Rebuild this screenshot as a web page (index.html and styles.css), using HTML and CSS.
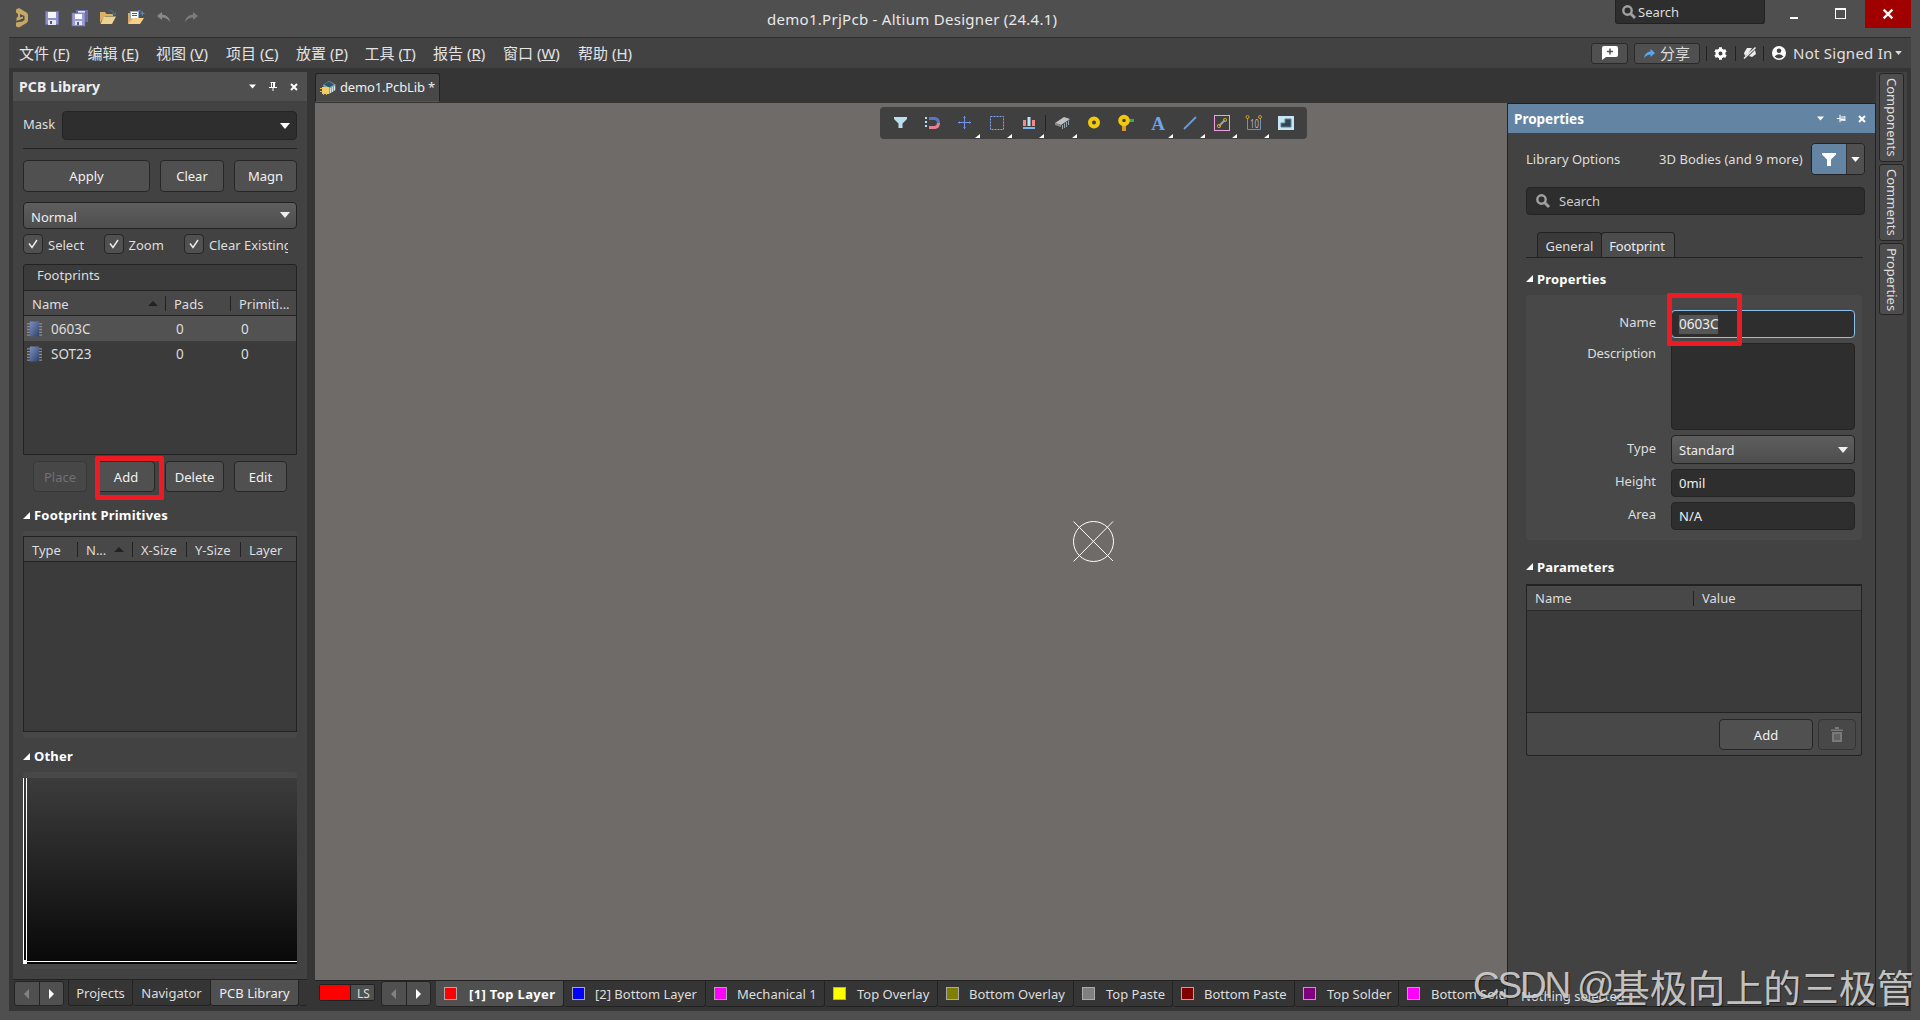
FILE: index.html
```html
<!DOCTYPE html>
<html lang="zh">
<head>
<meta charset="utf-8">
<title>demo1.PrjPcb - Altium Designer (24.4.1)</title>
<link rel="stylesheet" href="styles.css">
</head>
<body>
<svg class="defs" width="0" height="0">
  <defs>
    <linearGradient id="chipg" x1="0" y1="0" x2="1" y2="1"><stop offset="0" stop-color="#7f8dc4"/><stop offset="1" stop-color="#2c4468"/></linearGradient>
    <symbol id="down" viewBox="0 0 10 6"><path d="M0 0H10L5 6Z" fill="currentColor"/></symbol>
    <symbol id="fold" viewBox="0 0 7 7"><path d="M7 0V7H0Z" fill="#fff"/></symbol>
    <symbol id="left" viewBox="0 0 5 10"><path d="M5 0V10L0 5Z" fill="currentColor"/></symbol>
    <symbol id="right" viewBox="0 0 5 10"><path d="M0 0V10L5 5Z" fill="currentColor"/></symbol>
    <symbol id="x" viewBox="0 0 8 8"><path d="M1 1L7 7M7 1L1 7" stroke="#fff" stroke-width="2"/></symbol>
    <symbol id="pin" viewBox="0 0 8 9"><path d="M1.5 0.5H6.5M2.500 0V5M5.5 0V5M0 5.5H8M4 5V9" stroke="#fff" fill="none"/><path d="M4 0h2v5H4z" fill="#fff"/></symbol>
    <symbol id="check" viewBox="0 0 10 10"><path d="M1 4.5L4 8.5L9 1" stroke="#eee" stroke-width="1.4" fill="none"/></symbol>
    <symbol id="mag" viewBox="0 0 14 14"><circle cx="5.5" cy="5.5" r="4.2" stroke="#a0a0a0" stroke-width="2.4" fill="none"/><path d="M8.5 8.5L13 13" stroke="#a0a0a0" stroke-width="2.8"/></symbol>
    <symbol id="chip" viewBox="0 0 16 16"><path d="M0 2.5H16M0 5.5H16M0 8.5H16M0 11.5H16M0 14.5H16" stroke="#8a8f8c" stroke-width="1.4"/><rect x="3" y="0" width="10" height="16" fill="url(#chipg)"/></symbol>
    <symbol id="funnel" viewBox="0 0 14 13"><path d="M0 0H14V1.5L9 6.5V13H5V6.5L0 1.5Z" fill="currentColor"/></symbol>
    <symbol id="disk" viewBox="0 0 14 14"><rect x=".5" y=".5" width="13" height="13" fill="#8f8fc8" stroke="#6c6ca6"/><rect x="3" y="1" width="8" height="6" fill="#f4f4fb"/><rect x="3" y="9" width="8" height="5" fill="#e5e5ef"/><rect x="5" y="10" width="2" height="3" fill="#55557f"/></symbol>
  </defs>
</svg>

<header class="titlebar">
  <div class="quick">
    <svg class="q-logo" width="14" height="20" viewBox="0 0 14 20"><path d="M1 1.500L4 0L11.500 4.500Q13 5.500 13 7V12Q13 14 11.500 15L4 19.500L1 18.500V14.500L7.500 13.500L9.500 12V8L5 6V9.500L8 8.500V10.500L1.500 13V10L3 8.500V6L1 4.500Z" fill="#c6a763"/></svg>
    <svg class="q-save" width="14" height="14"><use href="#disk"/></svg>
    <svg class="q-saveall" width="16" height="16" viewBox="0 0 16 16"><rect x="4" y="0" width="12" height="12" fill="#6d6db0"/><rect x="6" y="1" width="7" height="5" fill="#e6e6f4"/><rect x="0" y="3" width="13" height="13" fill="#9c9cd4" stroke="#6c6ca6" stroke-width=".7"/><rect x="3" y="4" width="7" height="5" fill="#fafaff"/><rect x="3" y="11" width="7" height="4" fill="#e5e5ef"/><rect x="5" y="12" width="2" height="3" fill="#55557f"/></svg>
    <svg class="q-open" width="17" height="15" viewBox="0 0 17 15"><path d="M0 2H5L6.500 4H13V6H5L0 13Z" fill="#d9b065"/><path d="M4 6.500H16L12 14H0.500Z" fill="#f0d28f"/><path d="M9 1Q12.500 0 14 3.500M12 3.500L15 4.500L16 2" stroke="#3f6f98" fill="none" stroke-width="1.100"/></svg>
    <svg class="q-openp" width="17" height="15" viewBox="0 0 17 15"><path d="M0 3V14H3V3Z" fill="#e0a855"/><path d="M2.500 1.500H10.500V9H2.500Z" fill="#fff" stroke="#8fb0d0"/><path d="M4 3.500H9M4 5.500H9" stroke="#35639a"/><path d="M4.500 8H16L12 14H0.500Z" fill="#f7cf8b"/><path d="M10 .5Q13 0 14.500 3M12.500 3.500H16.500M14.500 1.500V5.500" stroke="#5b8bb4" fill="none"/></svg>
    <svg class="q-undo" width="14" height="11" viewBox="0 0 14 11"><path d="M0 4L5 0V2.500Q12 3 13.500 10.500Q10 5.500 5 5.500V8Z" fill="#8a8a8a"/></svg>
    <svg class="q-redo" width="14" height="11" viewBox="0 0 14 11"><path d="M14 4L9 0V2.500Q2 3 0.500 10.500Q4 5.500 9 5.500V8Z" fill="#7c7c7c"/></svg>
  </div>
  <div class="app-title">demo1.PrjPcb - Altium Designer (24.4.1)</div>
  <div class="win">
    <div class="top-search"><svg width="14" height="14"><use href="#mag"/></svg>Search</div>
    <div class="w-min"></div><div class="w-max"></div>
    <div class="w-close"><svg width="10" height="10" viewBox="0 0 8 8"><path d="M.5 .5L7.500 7.500M7.500 .5L.5 7.500" stroke="#fff" stroke-width="1.800"/></svg></div>
  </div>
</header>

<div class="shell">
<nav class="menubar">
  <div class="menus">
    <span>文件 (<u>F</u>)</span><span>编辑 (<u>E</u>)</span><span class="wide">视图 (<u>V</u>)</span><span class="wide">项目 (<u>C</u>)</span><span>放置 (<u>P</u>)</span><span>工具 (<u>T</u>)</span><span class="wide">报告 (<u>R</u>)</span><span class="widest">窗口 (<u>W</u>)</span><span>帮助 (<u>H</u>)</span>
  </div>
  <div class="account">
    <div class="mb comment"><svg width="16" height="14" viewBox="0 0 16 14"><path d="M2 0H14Q16 0 16 2V9Q16 11 14 11H4L0 14V2Q0 0 2 0Z" fill="#fff"/><path d="M8 2.500V8.500M5 5.500H11" stroke="#505050" stroke-width="1.500"/></svg></div>
    <div class="mb share"><svg width="11" height="9" viewBox="0 0 11 9"><path d="M11 4L6.500 0V2.500Q1 3 0 9Q3 5.500 6.500 5.500V8Z" fill="#58a6f5"/></svg>分享</div>
    <i class="vd"></i>
    <svg class="gear" width="13" height="13" viewBox="-6.500 -6.500 13 13"><circle r="3.500" fill="none" stroke="#fff" stroke-width="3"/><path d="M0 -6.200V-4M0 6.200V4M-5.400 -3.100L-3.500 -2M5.400 3.100L3.500 2M-5.400 3.100L-3.500 2M5.400 -3.100L3.500 -2" stroke="#fff" stroke-width="3"/></svg>
    <i class="vd"></i>
    <svg class="pen" width="14" height="12" viewBox="0 0 14 12"><path d="M1 6L4 1H9L5 7L2 9ZM6 9L12 3L13 7L9 10Z" fill="#eee"/><path d="M1 11.500L12.500 .5" stroke="#eee" stroke-width="1.500"/></svg>
    <i class="vd"></i>
    <svg class="user" width="14" height="14" viewBox="0 0 14 14"><circle cx="7" cy="7" r="7" fill="#fff"/><circle cx="7" cy="4.800" r="2.300" fill="#424242"/><path d="M2.500 10.500Q7 5.800 11.500 10.500Q9 12.500 7 12.500T2.500 10.500Z" fill="#424242"/></svg>
    <span class="signed">Not Signed In</span>
    <svg class="signed-car" width="7" height="4"><use href="#down"/></svg>
  </div>
</nav>

<main class="work">
  <aside class="lib">
    <div class="ph"><b>PCB Library</b><svg width="7" height="5"><use href="#down"/></svg><svg width="8" height="9"><use href="#pin"/></svg><svg width="8" height="8"><use href="#x"/></svg></div>
    <div class="lib-body">
      <div class="mask"><label>Mask</label><div class="field"><svg width="10" height="6"><use href="#down"/></svg></div></div>
      <hr>
      <div class="row3"><div class="btn apply">Apply</div><div class="btn clear">Clear</div><div class="btn magn">Magn</div></div>
      <div class="select normal">Normal<svg width="10" height="6"><use href="#down"/></svg></div>
      <div class="checks">
        <div class="ck"><i><svg width="10" height="10"><use href="#check"/></svg></i><span>Select</span></div>
        <div class="ck"><i><svg width="10" height="10"><use href="#check"/></svg></i><span>Zoom</span></div>
        <div class="ck"><i><svg width="10" height="10"><use href="#check"/></svg></i><span class="clip">Clear Existing</span></div>
      </div>
      <div class="grid foot">
        <div class="cap">Footprints</div>
        <div class="gh"><span>Name<svg width="10" height="5" viewBox="0 0 10 5"><path d="M0 5L5 0L10 5Z" fill="#222"/></svg></span><span>Pads</span><span>Primiti...</span></div>
        <div class="gr on"><svg width="15" height="16"><use href="#chip"/></svg><span>0603C</span><span>0</span><span>0</span></div>
        <div class="gr"><svg width="15" height="16"><use href="#chip"/></svg><span>SOT23</span><span>0</span><span>0</span></div>
      </div>
      <div class="row4"><div class="btn place">Place</div><div class="btn add">Add<div class="mark mark-add"></div></div><div class="btn delete">Delete</div><div class="btn edit">Edit</div></div>
      <h3 class="h-prim"><svg width="7" height="7"><use href="#fold"/></svg>Footprint Primitives</h3>
      <div class="group prims"><div class="grid"><div class="gh"><span>Type</span><span>N...<svg width="10" height="5" viewBox="0 0 10 5"><path d="M0 5L5 0L10 5Z" fill="#222"/></svg></span><span>X-Size</span><span>Y-Size</span><span>Layer</span></div></div></div>
      <h3 class="h-other"><svg width="7" height="7"><use href="#fold"/></svg>Other</h3>
      <div class="group other"><div class="preview"><svg width="274" height="186" viewBox="0 0 274 186" shape-rendering="crispEdges"><path d="M.5 0V186M3.500 0V186M0 183.500H274" stroke="#fff"/><path d="M0 182H4V186H0Z" fill="#fff"/></svg></div></div>
    </div>
    <div class="ptabs">
      <div class="nav"><span class="dim"><svg width="5" height="10"><use href="#left"/></svg></span><span><svg width="5" height="10"><use href="#right"/></svg></span></div>
      <div class="pt t-proj">Projects</div><div class="pt t-nav">Navigator</div><div class="pt t-lib on">PCB Library</div><div class="pt t-more"></div>
    </div>
  </aside>

  <section class="doc">
    <div class="doctabs"><div class="dt"><svg width="16" height="14" viewBox="0 0 16 14"><path d="M3 4L9 0L15.500 3.500V9L9 13L6 12Z" fill="#7fa3ae"/><path d="M4 3.500L9 .5L14 3.500L9 6.500Z" fill="#2d5468"/><path d="M10.500 7V12M12.500 6V11M14.500 5V9.500" stroke="#cfe0e4"/><rect x="2" y="6" width="7" height="7" fill="#f3cf66"/><path d="M0 7.500H3M0 10.500H3M3.500 14V12M6.500 14V12" stroke="#e5b94a"/></svg><span>demo1.PcbLib *</span></div></div>
    <div class="canvas">
      <div class="tools">
        <svg width="427" height="32" viewBox="0 0 427 32">
          <g fill="#fff"><path d="M100 27V31H95Z"/><path d="M132 27V31H127Z"/><path d="M164 27V31H159Z"/><path d="M197 27V31H192Z"/><path d="M293 27V31H288Z"/><path d="M325 27V31H320Z"/><path d="M357 27V31H352Z"/><path d="M389 27V31H384Z"/></g>
          <path d="M14 10H27V12L22.500 16.500V21H18.500V16.500L14 12Z" fill="#b9dfee"/>
          <path d="M46 10V22" stroke="#b9dfee" stroke-width="2" stroke-dasharray="2 2"/><path d="M49 11.500H55Q58.500 12 58.500 16" stroke="#5874c4" stroke-width="3" fill="none"/><path d="M49 20.500H55Q58.500 20 58.500 16" stroke="#e58290" stroke-width="3" fill="none"/>
          <path d="M84.500 9V22M78 15.500H91" stroke="#6f94ea"/><path d="M83 10.500H86M83 20.500H86M79.500 14V17M89.500 14V17" stroke="#6f94ea" opacity=".5"/>
          <rect x="110.500" y="9.500" width="13" height="13" fill="none" stroke="#7fa3f5" stroke-dasharray="2 1"/>
          <path d="M143 13H146V19H143ZM152 13H155V19H152Z" fill="#ef8a8a"/><path d="M147.500 10H150.500V19H147.500Z" fill="#b8e4f3"/><path d="M143 21H155" stroke="#7fb2ee" stroke-width="2"/>
          <path d="M165.500 8V24" stroke="#222"/>
          <path d="M175 16L184 10L190 12L181 18Z" fill="#c0c0c0"/><path d="M175 16L181 18V20L175 18Z" fill="#8c8c8c"/><path d="M182.500 18V22M184.500 16.500V21M186.500 15V20M188.500 13.500V18" stroke="#93a4ac" stroke-width="1"/>
          <circle cx="214" cy="15.500" r="4" fill="none" stroke="#f2c811" stroke-width="4"/>
          <path d="M244 15V24" stroke="#d99a2b" stroke-width="4"/><path d="M247 13.500H254" stroke="#3faa3f" stroke-width="3"/><circle cx="244" cy="13.500" r="3.800" fill="none" stroke="#f2c811" stroke-width="4"/>
          <text x="278" y="23" text-anchor="middle" class="tool-a">A</text>
          <path d="M304 22L316 10" stroke="#5b9be6" stroke-width="2"/>
          <rect x="334.500" y="8.500" width="15" height="15" fill="none" stroke="#f0a0e0"/><path d="M339 19L345 13" stroke="#8aa6b4" stroke-width="2"/><circle cx="339" cy="19" r="1.700" fill="none" stroke="#d09a20"/><circle cx="345" cy="13" r="1.700" fill="none" stroke="#d09a20"/>
          <path d="M367.500 11V22.500H380.500V11" stroke="#6d93bd" fill="none"/><circle cx="367.500" cy="10" r="1.500" fill="none" stroke="#d09a20"/><circle cx="380" cy="10" r="1.500" fill="none" stroke="#d09a20"/><text x="370" y="21" textLength="9" lengthAdjust="spacingAndGlyphs" class="tool-10">10</text>
          <rect x="398" y="9" width="16" height="14" fill="#c8e6f2"/><path d="M405 12H411V20H401V16H405Z" fill="#38444c" stroke="#4f83a8"/>
        </svg>
      </div>
      <svg class="origin" width="42" height="42" viewBox="0 0 42 42"><circle cx="20.500" cy="20.500" r="20" fill="none" stroke="#fff"/><path d="M.5 .5L40 40M40 .5L.5 40.500" stroke="#fff"/></svg>
    </div>
    <div class="layers">
      <div class="ls"><i></i><span>LS</span></div>
      <div class="nav"><span class="dim"><svg width="5" height="10"><use href="#left"/></svg></span><span><svg width="5" height="10"><use href="#right"/></svg></span></div>
      <div class="ly l1 on"><i class="c-red"></i>[1] Top Layer</div>
      <div class="ly l2"><i class="c-blue"></i>[2] Bottom Layer</div>
      <div class="ly l3"><i class="c-mag"></i>Mechanical 1</div>
      <div class="ly l4"><i class="c-yel"></i>Top Overlay</div>
      <div class="ly l5"><i class="c-olive"></i>Bottom Overlay</div>
      <div class="ly l6"><i class="c-gray"></i>Top Paste</div>
      <div class="ly l7"><i class="c-maroon"></i>Bottom Paste</div>
      <div class="ly l8"><i class="c-purple"></i>Top Solder</div>
      <div class="ly l9"><i class="c-mag"></i>Bottom Sold</div>
    </div>
  </section>

  <aside class="props">
    <div class="ph"><b>Properties</b><svg width="7" height="5"><use href="#down"/></svg><svg class="rot" width="8" height="9"><use href="#pin"/></svg><svg width="8" height="8"><use href="#x"/></svg></div>
    <div class="props-body">
      <div class="opts"><span class="lo">Library Options</span><span class="bodies">3D Bodies (and 9 more)</span><div class="filt"><i><svg width="14" height="13"><use href="#funnel"/></svg></i><i class="fd"><svg width="9" height="5"><use href="#down"/></svg></i></div></div>
      <div class="psearch"><svg width="14" height="14"><use href="#mag"/></svg>Search</div>
      <div class="tabs"><div>General</div><div class="on">Footprint</div></div>
      <h3 class="h-p"><svg width="7" height="7"><use href="#fold"/></svg>Properties</h3>
      <div class="form">
        <div class="fr name"><label>Name</label><div class="field focus"><span class="sel">0603C</span><div class="mark mark-name"></div></div></div>
        <div class="fr desc"><label>Description</label><div class="field"></div></div>
        <div class="fr"><label>Type</label><div class="select">Standard<svg width="10" height="6"><use href="#down"/></svg></div></div>
        <div class="fr"><label>Height</label><div class="field">0mil</div></div>
        <div class="fr"><label>Area</label><div class="field">N/A</div></div>
      </div>
      <h3 class="h-par"><svg width="7" height="7"><use href="#fold"/></svg>Parameters</h3>
      <div class="params">
        <div class="gh"><span>Name</span><span>Value</span></div>
        <div class="pbody"></div>
        <div class="pfoot"><div class="btn">Add</div><div class="btn trash"><svg width="12" height="15" viewBox="0 0 12 15"><path d="M0 2.500H12V4H0ZM4 0H8V2H4ZM1 5H11V15H1Z" fill="#7a7a7a"/><path d="M4 7V13M6 7V13M8 7V13" stroke="#484848"/></svg></div></div>
      </div>
    </div>
    <div class="status">Nothing selected</div>
  </aside>

  <div class="side"><div class="s1">Components</div><div class="s2">Comments</div><div class="s3">Properties</div></div>
</main>
</div>
<div class="watermark"><span>CSDN @</span>基极向上的三极管</div>
</body>
</html>
```

FILE: styles.css
```css
* { box-sizing: border-box; }
body { margin: 0; width: 1920px; height: 1020px; overflow: hidden; position: relative; background: #4f4f4f; color: #dedede; font: 13px/18px "Noto Sans", "Open Sans", "Noto Sans CJK SC", sans-serif; letter-spacing: 0; }
svg { display: block; flex: none; overflow: visible; }
.defs { position: absolute; }
i { font-style: normal; }
h3 { margin: 0; font-size: 13px; line-height: 18px; font-weight: 700; letter-spacing: 0.2px; color: #fff; display: flex; align-items: center; gap: 4px; }

/* title bar */
.titlebar { height: 37px; display: grid; grid-template-columns: 767px 1fr 305px; }
.quick { display: flex; align-items: flex-start; }
.q-logo { margin: 8px 0 0 15px; }
.q-save { margin: 11px 0 0 16px; }
.q-saveall { margin: 10px 0 0 13px; }
.q-open { margin: 10px 0 0 12px; }
.q-openp { margin: 10px 0 0 11px; }
.q-undo { margin: 12px 0 0 12px; }
.q-redo { margin: 12px 0 0 13px; }
.app-title { font-size: 15px; line-height: 38px; letter-spacing: 0.28px; white-space: nowrap; color: #e8e8e8; }
.win { display: flex; align-items: flex-start; }
.top-search { width: 150px; height: 24px; background: #2e2e2e; border: 1px solid #222; border-top: 0; border-radius: 0 0 3px 3px; display: flex; align-items: center; gap: 2px; padding-left: 6px; color: #ddd; }
.w-min { width: 8px; height: 2px; background: #fff; margin: 17px 0 0 25px; }
.w-max { width: 11px; height: 11px; border: 1px solid #fff; border-top-width: 2px; margin: 8px 0 0 37px; }
.w-close { width: 46px; height: 28px; background: #a00000; margin-left: 19px; display: flex; align-items: center; justify-content: center; }

/* menu bar */
.shell { margin-left: 9px; width: 1902px; height: 974px; background: #353535; display: flex; flex-direction: column; }
.menubar { height: 31px; flex: none; background: #424242; border-top: 1px solid #2e2e2e; display: flex; justify-content: space-between; }
.menus { display: flex; padding-left: 10px; font-size: 15px; line-height: 31px; color: #e4e4e4; letter-spacing: 0; }
.menus span { width: 68.500px; white-space: nowrap; }
.menus .wide { width: 70px; }
.menus .widest { width: 75px; }
.account { display: flex; align-items: center; padding-right: 9px; }
.mb { height: 21px; background: #505050; border: 1px solid #2a2a2a; border-radius: 3px; display: flex; align-items: center; justify-content: center; font-size: 15px; color: #ddd; gap: 5px; }
.comment { width: 37px; margin-right: 6px; }
.share { width: 66px; margin-right: 6px; }
.vd { width: 1px; height: 15px; background: #222; }
.gear { margin: 0 8px 0 7px; }
.pen { margin: 0 6px 0 7px; }
.user { margin: 0 7px 0 8px; }
.signed { font-size: 15px; width: 102px; white-space: nowrap; color: #e0e0e0; letter-spacing: 0.25px; }
.signed-car { color: #ddd; }

.work { display: flex; flex: 1; padding: 4px 0 4px 4px; }

/* shared pieces */
.ph { height: 29px; background: #4f4f4f; display: flex; align-items: center; padding: 0 9px 0 6px; gap: 13px; color: #fff; }
.ph b { flex: 1; font-size: 14px; letter-spacing: 0.1px; color: #eee; }
.btn { background: #505050; border: 1px solid #262626; border-radius: 4px; display: flex; align-items: center; justify-content: center; color: #f2f2f2; position: relative; }
.field { background: #2e2e2e; border: 1px solid #242424; border-radius: 4px; color: #eee; }
.select { background: linear-gradient(#5e5e5e, #4e4e4e); border: 1px solid #222; border-radius: 4px; display: flex; align-items: center; justify-content: space-between; color: #eee; }
.mark { position: absolute; border: 5px solid #ed1c24; border-radius: 2px; z-index: 3; }
.group { background: #484848; border-radius: 4px; }
.grid { background: #3b3b3b; border: 1px solid #222; }
.gh { height: 25px; background: #484848; border-bottom: 1px solid #222; display: flex; align-items: center; }
.gh span { display: flex; align-items: center; justify-content: space-between; height: 15px; border-left: 1px solid #222; padding-left: 8px; padding-right: 7px; }
.gh span:first-child { border-left: 0; }
.nav { width: 50px; height: 25px; background: #505050; border: 1px solid #242424; border-radius: 3px; display: flex; color: #fff; flex: none; }
.nav span { flex: 1; display: flex; align-items: center; justify-content: center; }
.nav span + span { border-left: 1px solid #242424; }
.nav .dim { color: #828282; }

/* library panel */
.lib { width: 294px; background: #424242; display: flex; flex-direction: column; }
.lib-body { height: 878px; padding: 10px 10px 0; }
.mask { display: flex; height: 29px; align-items: center; }
.mask label { width: 39px; line-height: 26px; padding-bottom: 3px; }
.mask .field { flex: 1; height: 29px; display: flex; align-items: center; justify-content: flex-end; padding-right: 6px; color: #fff; }
hr { border: 0; height: 1px; background: #222; margin: 8px 0 11px; }
.row3 { display: flex; gap: 10px; height: 32px; }
.apply { width: 127px; } .clear { width: 64px; } .magn { width: 63px; }
.normal { height: 27px; margin-top: 10px; padding: 2px 6px 0 7px; }
.normal svg { margin-top: -3px; }
.checks { display: flex; height: 20px; margin-top: 5px; }
.ck { display: flex; align-items: center; width: 80.500px; white-space: nowrap; }
.ck i { width: 20px; height: 20px; flex: none; background: #505050; border: 1px solid #262626; border-radius: 4px; display: flex; align-items: center; justify-content: center; margin-right: 5px; }
.ck span { padding-top: 2px; }
.clip { width: 79px; overflow: hidden; flex: none; }
.foot { height: 191px; margin-top: 10px; border-radius: 3px 3px 0 0; }
.cap { height: 26px; border-bottom: 1px solid #222; padding: 1px 0 0 13px; }
.foot .gh { padding-top: 1px; }
.foot .gh span:nth-child(1) { width: 141px; } .foot .gh span:nth-child(2) { width: 65px; } .foot .gh span:nth-child(3) { padding-right: 0; }
.gr { height: 25px; display: grid; grid-template-columns: 24px 125px 65px 40px; align-items: center; padding-left: 3px; }
.gr span { font-size: 13.500px; }
.gr.on { background: #525252; }
.row4 { display: flex; margin: 6px 0 0 10px; height: 31px; }
.place { width: 54px; background: #474747; border-color: #383838; color: #707070; }
.add { width: 58px; margin-left: 10px; }
.delete { width: 59px; margin-left: 10px; }
.edit { width: 53px; margin-left: 10px; }
.mark-add { left: -3px; top: -6px; width: 69px; height: 44px; }
.h-prim { height: 39px; padding-top: 7px; }
.prims { height: 207px; padding: 5px 0 6px; }
.prims .grid { height: 196px; }
.prims .gh { padding-top: 1px; }
.prims .gh span { width: 54px; padding-right: 8px; white-space: nowrap; }
.prims .gh span:nth-child(1) { width: 53px; }
.prims .gh span:nth-child(2) { width: 55px; }
.prims .gh span:nth-child(n+3) { padding-right: 0; }
.h-other { height: 34px; padding-top: 2px; }
.other { height: 197px; padding: 6px 0 5px; }
.preview { height: 186px; background: linear-gradient(#3c3c3c, #080808); }
.ptabs { flex: 1; background: #353535; border-top: 1px solid #222; display: flex; align-items: flex-start; padding-left: 1px; }
.ptabs .nav { margin: 1px 4px 0 0; }
.pt { height: 26px; border: 1px solid #222; border-top: 0; border-left-width: 0; display: flex; align-items: center; justify-content: center; border-radius: 0 0 3px 3px; white-space: nowrap; }
.pt.on { background: #505050; color: #eee; }
.t-proj { width: 65px; border-left-width: 1px; } .t-nav { width: 78px; } .t-lib { width: 88px; } .t-more { flex: 1; border-right: 0; }

/* document */
.doc { margin-left: 8px; width: 1192px; display: flex; flex-direction: column; }
.doctabs { height: 31px; padding-top: 1px; }
.dt { width: 125px; height: 29px; background: #484848; border: 1px solid #222; border-bottom-color: #555; border-radius: 3px 3px 0 0; display: flex; align-items: center; gap: 4px; padding-left: 4px; color: #eee; white-space: nowrap; letter-spacing: -0.15px; }
.dt span { padding-bottom: 2px; }
.canvas { height: 877px; background: #6f6b69; position: relative; }
.tools { position: absolute; left: 565px; top: 4px; width: 427px; height: 32px; background: #404040; border-radius: 4px; }
.tool-a { font: bold 19px "Liberation Serif", serif; fill: #6aa5ee; }
.tool-10 { font: 12px "Noto Sans", sans-serif; fill: #b4b4b4; }
.origin { position: absolute; left: 758px; top: 418px; }
.layers { height: 27px; display: flex; align-items: flex-start; overflow: hidden; border-top: 1px solid #222; }
.ls { display: flex; flex: none; width: 56px; height: 17px; margin: 3px 6px 0 4px; border: 1px solid #222; border-radius: 2px; background: #505050; }
.ls i { width: 31px; background: #f00; border-right: 1px solid #222; }
.ls span { padding-left: 6px; line-height: 17px; font-size: 12px; }
.layers .nav { margin-right: 5px; }
.ly { height: 26px; flex: none; border: 1px solid #222; border-top: 0; border-left: 0; border-radius: 0 0 3px 3px; display: flex; align-items: center; padding: 0 0 0 8px; white-space: nowrap; }
.ly i { width: 13px; height: 13px; border: 1px solid #aaa; margin-right: 10px; flex: none; }
.ly.on { background: #505050; color: #fff; font-weight: 700; letter-spacing: 0.35px; }
.l1 { width: 128px; } .l1 i { margin-right: 12px; }
.l2 { width: 142px; } .l3 { width: 119px; } .l4 { width: 113px; } .l5 { width: 136px; } .l6 { width: 99px; } .l7 { width: 122px; } .l8 { width: 104px; } .l9 { width: 110px; }
.l4 i, .l6 i, .l8 i, .l9 i { margin-right: 11px; }
.c-red { background: #f00; } .c-blue { background: #00f; } .c-mag { background: #f0f; } .c-yel { background: #ff0; } .c-olive { background: #808000; } .c-gray { background: #808080; } .c-maroon { background: #800000; } .c-purple { background: #800080; }

/* properties panel */
.props { width: 369px; margin-top: 31px; background: #424242; border: 1px solid #222; display: flex; flex-direction: column; }
.props .ph { background: #6484a4; }
.props .ph b { font-size: 13.500px; color: #fff; letter-spacing: 0; }
.rot { transform: rotate(90deg); }
.props-body { flex: 1; padding: 10px 10px 0 18px; }
.opts { display: flex; height: 32px; align-items: center; }
.lo { width: 133px; } .bodies { width: 152px; white-space: nowrap; letter-spacing: 0.05px; }
.filt { width: 54px; height: 32px; border: 1px solid #222; border-radius: 4px; display: flex; overflow: hidden; color: #fff; }
.filt i { width: 35px; background: #6484a4; display: flex; align-items: center; justify-content: center; }
.filt .fd { width: 18px; background: #505050; border-left: 1px solid #333; }
.psearch { height: 28px; margin-top: 12px; background: #2e2e2e; border: 1px solid #242424; border-radius: 4px; display: flex; align-items: center; gap: 9px; padding-left: 9px; color: #ccc; }
.tabs { height: 26px; margin: 17px 2px 0 0; padding-left: 11px; border-bottom: 1px solid #222; display: flex; }
.tabs div { width: 65px; border: 1px solid #222; border-bottom: 0; border-radius: 4px 4px 0 0; background: #3a3a3a; display: flex; align-items: center; justify-content: center; padding-top: 2px; }
.tabs .on { width: 74px; margin-left: -1px; padding-right: 2px; background: #4c4c4c; color: #eee; letter-spacing: -0.1px; }
.h-p { height: 37px; padding-top: 4px; }
.form { width: 336px; height: 245px; background: #484848; border-radius: 4px; padding-top: 15px; display: flex; flex-direction: column; gap: 5px; }
.fr { display: flex; height: 28px; }
.fr label { width: 130px; margin-right: 15px; text-align: right; padding-top: 3px; }
.fr .field, .fr .select { width: 184px; padding-left: 7px; display: flex; align-items: center; position: relative; }
.fr .select { padding-right: 6px; }
.fr .focus { border-color: #8ec0f0; }
.fr.desc { height: 87px; } .desc label { padding-top: 1px; letter-spacing: -0.1px; }
.fr:nth-child(3) { height: 29px; }
.fr:nth-child(3) label { padding-top: 4px; }
.sel { background: #565656; line-height: 19px; font-size: 13.500px; }
.mark-name { left: -5px; top: -18px; width: 75px; height: 53px; }
.h-par { height: 44px; padding-top: 9px; }
.params { width: 336px; height: 172px; background: #484848; border: 1px solid #222; border-top-width: 2px; border-radius: 0 0 3px 3px; }
.params .gh { border-bottom-color: #2c2c2c; }
.params .gh span:first-child { width: 166px; }
.pbody { height: 102px; background: #3b3b3b; border-bottom: 1px solid #222; }
.pfoot { display: flex; justify-content: flex-end; gap: 5px; padding: 6px 5px 0 0; }
.pfoot .btn { width: 94px; height: 31px; }
.pfoot .trash { width: 38px; background: #484848; border-color: #343434; }
.status { height: 21px; padding-left: 13px; line-height: 22px; }

/* docked tabs on the right edge */
.side { width: 31px; background: #424242; padding: 1px 0 0 3px; }
.side div { width: 25px; background: #4d4d4d; border: 1px solid #242424; border-radius: 3px; writing-mode: vertical-rl; display: flex; align-items: center; padding-top: 4px; margin-bottom: 2px; white-space: nowrap; }
.s1 { height: 89px; } .s2 { height: 77px; } .s3 { height: 72px; }

.watermark { position: absolute; left: 1473px; top: 961px; line-height: 50px; font-family: "Noto Sans CJK SC", sans-serif; font-weight: 400; font-size: 37.800px; letter-spacing: 0; white-space: nowrap; color: rgba(215,215,215,.88); text-shadow: 1px 1px 1px rgba(0,0,0,.45); display: flex; }
.watermark span { width: 139px; font-family: "Liberation Sans", sans-serif; font-size: 37px; letter-spacing: -2.200px; }
```
